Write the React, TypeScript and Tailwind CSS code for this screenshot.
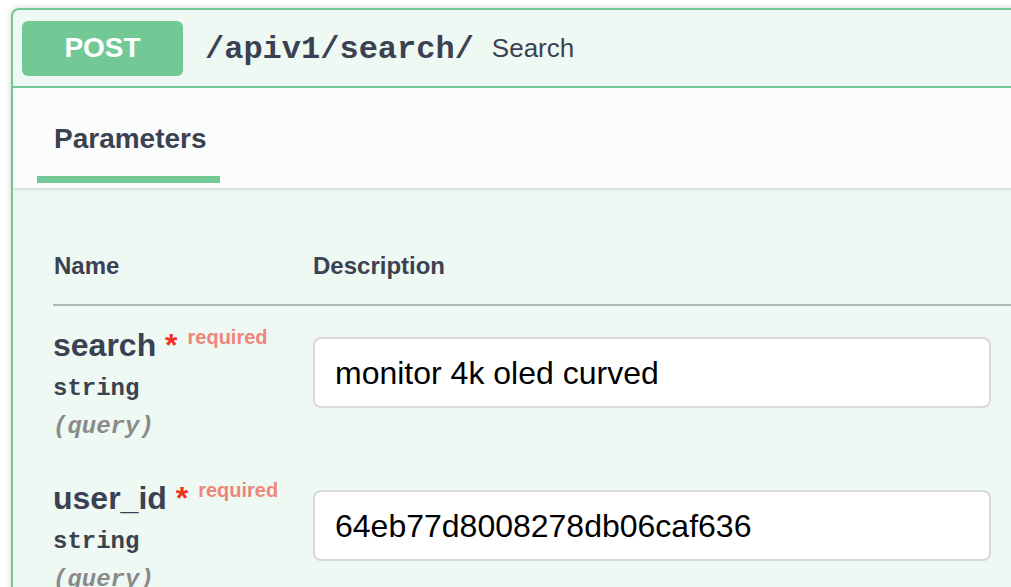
import React from "react";

const sans = { fontFamily: '"Liberation Sans", Arial, sans-serif' };
const mono = { fontFamily: '"Liberation Mono", "Courier New", monospace' };

function ParamRow({ name, value }: { name: string; value: string }) {
  return (
    <div className="flex pt-[20px] pb-[18px]">
      <div className="w-[260px] shrink-0">
        <div className="text-[32px] leading-[38px] font-bold text-[#3b4151] whitespace-nowrap" style={sans}>
          {name}
          <span className="text-[#f0311f]">&nbsp;*</span>
          <span className="relative top-[-12px] pl-[10px] text-[20px] font-bold text-[#f0857a]">required</span>
        </div>
        <div className="mt-[7px] text-[24px] leading-[28px] font-bold text-[#3b4151]" style={mono}>
          string
        </div>
        <div className="mt-[10px] text-[24px] leading-[28px] font-bold italic text-[#8a8a8a]" style={mono}>
          (query)
        </div>
      </div>
      <div className="pt-[11px]">
        <div
          className="w-[678px] h-[71px] rounded-[8px] border-2 border-[#d9d9d9] bg-white flex items-center px-[20px] text-[32px] text-black"
          style={sans}
        >
          {value}
        </div>
      </div>
    </div>
  );
}

export default function App() {
  return (
    <div className="w-[1011px] h-[587px] overflow-hidden bg-white pt-[8px] pl-[11px]" style={sans}>
      <div className="w-[1060px] h-[700px] rounded-[8px] border-2 border-[#72c996] bg-[#eef9f3] shadow-[0_0_6px_rgba(0,0,0,0.19)]">
        {/* Header */}
        <div className="h-[78px] flex items-center pl-[9px] border-b-2 border-[#72c996]">
          <div className="w-[161px] h-[55px] rounded-[6px] bg-[#72c996] flex items-center justify-center text-white font-bold text-[28px]">
            POST
          </div>
          <div className="ml-[22px] pt-[3px] text-[32px] font-bold text-[#3b4151]" style={mono}>
            /apiv1/search/
          </div>
          <div className="ml-[18px] text-[26px] text-[#3b4151]">Search</div>
        </div>
        {/* Tab section */}
        <div className="h-[100px] bg-[#fbfdfc] shadow-[0_2px_3px_rgba(0,0,0,0.1)] pl-[24px] pt-[34px] pb-[5px] flex items-end">
          <div className="flex flex-col">
            <div className="pl-[17px] text-[28px] leading-[34px] font-bold text-[#3b4151]">Parameters</div>
            <div className="mt-[20px] w-[183px] h-[7px] bg-[#72c996]" />
          </div>
        </div>
        {/* Table */}
        <div className="pl-[40px]">
          <div className="pt-[64px] pb-[24px] flex border-b-2 border-[#b1b6b6] text-[24px] leading-[28px] font-bold text-[#3b4151]">
            <div className="w-[260px] pl-[1px]">Name</div>
            <div>Description</div>
          </div>
          <ParamRow name="search" value="monitor 4k oled curved" />
          <ParamRow name="user_id" value="64eb77d8008278db06caf636" />
        </div>
      </div>
    </div>
  );
}
